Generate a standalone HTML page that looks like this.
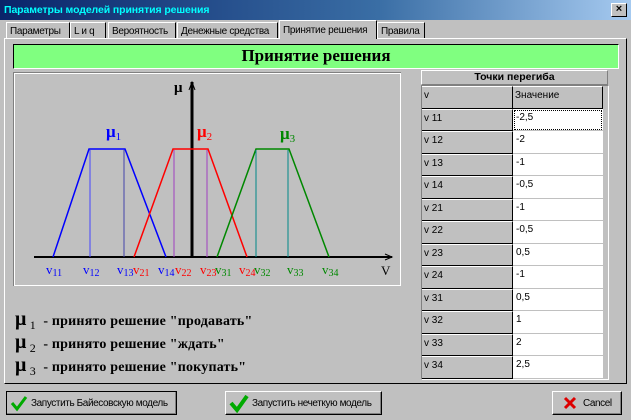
<!DOCTYPE html><html><head><meta charset="utf-8"><style>
*{margin:0;padding:0;box-sizing:border-box}
body{width:631px;height:420px;background:#c0c0c0;font-family:"Liberation Sans",sans-serif;font-size:10px;position:relative;overflow:hidden}
.a{position:absolute}
.title{left:0;top:0;width:631px;height:20px;background:linear-gradient(90deg,#0a246a,#3a6ea5 60%,#a6caf0);color:#0ff;font-weight:bold;font-size:10.5px;padding:4px 4px;letter-spacing:-0.1px}
.x{right:4px;top:3px;width:16px;height:14px;background:#c0c0c0;border:1px solid;border-color:#fff #000 #000 #fff;font-size:11px;text-align:center;line-height:11px;font-weight:bold}
.tab{top:22px;height:17px;border:1px solid;border-color:#fff #000 #c0c0c0 #fff;padding:3px 3px;font-size:10px;letter-spacing:-0.3px;white-space:nowrap;overflow:hidden}
.panel{left:4px;top:38px;width:623px;height:346px;border:1px solid;border-color:#fff #000 #000 #fff}
.banner{left:13px;top:44px;width:606px;height:25px;background:#80ff80;border:1px solid;border-color:#000 #fff #fff #000;font-family:"Liberation Serif",serif;font-weight:bold;font-size:17px;text-align:center;line-height:22px}
.l{height:22.5px;border-right:1px solid #000;border-bottom:1px solid #000;border-top:1px solid #fff;padding:3px 2px;font-size:10px;background:#c0c0c0}
.r{height:22.5px;border-bottom:1px solid #c0c0c0;padding:3px 3px;font-size:10px;background:#fff}
.btn{top:391px;height:24px;border:1px solid;border-color:#fff #000 #000 #fff;box-shadow:inset -1px -1px #808080;font-size:10px;letter-spacing:-0.4px;padding:6px 2px 0 24px;white-space:nowrap;overflow:hidden}
.leg{left:15px;font-family:"Liberation Serif",serif;font-weight:bold;font-size:14px;letter-spacing:0.2px}
.leg b{font-size:20px}.leg sub{font-size:12px;font-weight:normal}
</style></head><body>
<div class="a title">Параметры моделей принятия решения</div>
<div class="a x">×</div>
<div class="a tab" style="left:6px;width:64px">Параметры</div>
<div class="a tab" style="left:70px;width:36px">L и q</div>
<div class="a tab" style="left:108px;width:68px">Вероятность</div>
<div class="a tab" style="left:177px;width:101px">Денежные средства</div>
<div class="a tab" style="left:279px;top:20px;height:19px;width:98px;border-bottom:none;background:#c0c0c0;z-index:2;padding-top:4px">Принятие решения</div>
<div class="a tab" style="left:377px;width:48px">Правила</div>
<div class="a panel"></div>
<div class="a banner">Принятие решения</div>
<svg class="a" style="left:13px;top:72px" width="388" height="214">
<rect x="0.5" y="0.5" width="387" height="213" fill="none" stroke="#808080"/>
<rect x="1.5" y="1.5" width="386" height="212" fill="none" stroke="#fff"/>
<g transform="translate(-13,-72)" font-family="Liberation Serif,serif" font-weight="bold">
<line x1="34" y1="257" x2="392" y2="257" stroke="#000" stroke-width="2"/>
<path d="M385 254 L392 257 L385 260" fill="none" stroke="#000"/>
<line x1="192" y1="257" x2="192" y2="82" stroke="#000" stroke-width="3"/>
<path d="M189 90 L192 82 L195 90" fill="none" stroke="#000"/>
<text x="174" y="92" font-size="15">μ</text>
<text x="381" y="275" font-size="13" font-weight="normal">V</text>
<polyline points="53,257 89,149 125,149 166,257" fill="none" stroke="#00f" stroke-width="1.5"/>
<line x1="90" y1="150" x2="90" y2="257" stroke="#44f"/><line x1="124" y1="150" x2="124" y2="257" stroke="#44a"/>
<polyline points="134,257 173,149 208,149 247,257" fill="none" stroke="#f00" stroke-width="1.5"/>
<line x1="174" y1="150" x2="174" y2="257" stroke="#a040c0"/><line x1="207" y1="150" x2="207" y2="257" stroke="#a040c0"/>
<polyline points="217,257 256,149 289,149 329,257" fill="none" stroke="#080" stroke-width="1.5"/>
<line x1="256" y1="150" x2="256" y2="257" stroke="#088"/><line x1="288" y1="150" x2="288" y2="257" stroke="#088"/>
<text x="106" y="137" fill="#00f" font-size="17">μ<tspan font-size="11" dy="3" font-weight="normal">1</tspan></text>
<text x="197" y="137" fill="#f00" font-size="17">μ<tspan font-size="11" dy="3" font-weight="normal">2</tspan></text>
<text x="280" y="139" fill="#080" font-size="17">μ<tspan font-size="11" dy="3" font-weight="normal">3</tspan></text>
<g font-size="13" font-weight="normal"><text y="274" fill="#00f"><tspan x="46">v</tspan><tspan font-size="10" dy="2">11</tspan></text>
<text y="274" fill="#00f"><tspan x="83">v</tspan><tspan font-size="10" dy="2">12</tspan></text>
<text y="274" fill="#00f"><tspan x="117">v</tspan><tspan font-size="10" dy="2">13</tspan></text>
<text y="274" fill="#f00"><tspan x="133">v</tspan><tspan font-size="10" dy="2">21</tspan></text>
<text y="274" fill="#00f"><tspan x="158">v</tspan><tspan font-size="10" dy="2">14</tspan></text>
<text y="274" fill="#f00"><tspan x="175">v</tspan><tspan font-size="10" dy="2">22</tspan></text>
<text y="274" fill="#f00"><tspan x="200">v</tspan><tspan font-size="10" dy="2">23</tspan></text>
<text y="274" fill="#080"><tspan x="215">v</tspan><tspan font-size="10" dy="2">31</tspan></text>
<text y="274" fill="#f00"><tspan x="239">v</tspan><tspan font-size="10" dy="2">24</tspan></text>
<text y="274" fill="#080"><tspan x="254">v</tspan><tspan font-size="10" dy="2">32</tspan></text>
<text y="274" fill="#080"><tspan x="287">v</tspan><tspan font-size="10" dy="2">33</tspan></text>
<text y="274" fill="#080"><tspan x="322">v</tspan><tspan font-size="10" dy="2">34</tspan></text></g>
</g></svg>
<div class="a" style="left:421px;top:70px;width:187px;height:15px;border:1px solid;border-color:#fff #808080 #808080 #fff;font-weight:bold;text-align:center;font-size:10.5px;line-height:13px">Точки перегиба</div>
<div class="a" style="left:421px;top:85px;width:188px;height:295px;border:1px solid;border-color:#808080 #fff #fff #808080;overflow:hidden">
<div style="display:grid;grid-template-columns:91px 90px;grid-auto-rows:22.5px">
<div class="l">v</div><div class="l">Значение</div>
<div class="l">v 11</div><div class="r" style="outline:1px dotted #000;outline-offset:-2px">-2,5</div>
<div class="l">v 12</div><div class="r">-2</div>
<div class="l">v 13</div><div class="r">-1</div>
<div class="l">v 14</div><div class="r">-0,5</div>
<div class="l">v 21</div><div class="r">-1</div>
<div class="l">v 22</div><div class="r">-0,5</div>
<div class="l">v 23</div><div class="r">0,5</div>
<div class="l">v 24</div><div class="r">-1</div>
<div class="l">v 31</div><div class="r">0,5</div>
<div class="l">v 32</div><div class="r">1</div>
<div class="l">v 33</div><div class="r">2</div>
<div class="l">v 34</div><div class="r">2,5</div>
</div></div>
<div class="a leg" style="top:308px"><b>μ</b><sub> 1</sub>&nbsp; - принято решение "продавать"</div>
<div class="a leg" style="top:331px"><b>μ</b><sub> 2</sub>&nbsp; - принято решение "ждать"</div>
<div class="a leg" style="top:354px"><b>μ</b><sub> 3</sub>&nbsp; - принято решение "покупать"</div>
<div class="a btn" style="left:6px;width:171px;border:1px solid #000">Запустить Байесовскую модель</div>
<div class="a btn" style="left:225px;width:157px;padding-left:26px">Запустить нечеткую модель</div>
<div class="a btn" style="left:552px;width:70px;padding-left:30px">Cancel</div>
<svg class="a" style="left:10px;top:394px" width="18" height="18"><path d="M2 9 L7 15 L16 3" fill="none" stroke="#0a0" stroke-width="3"/></svg>
<svg class="a" style="left:229px;top:393px" width="20" height="20"><path d="M2 10 L8 17 L18 3" fill="none" stroke="#0a0" stroke-width="4"/></svg>
<svg class="a" style="left:563px;top:396px" width="14" height="14"><path d="M2 2 L12 12 M12 2 L2 12" stroke="#d00" stroke-width="3"/></svg>
</body></html>
